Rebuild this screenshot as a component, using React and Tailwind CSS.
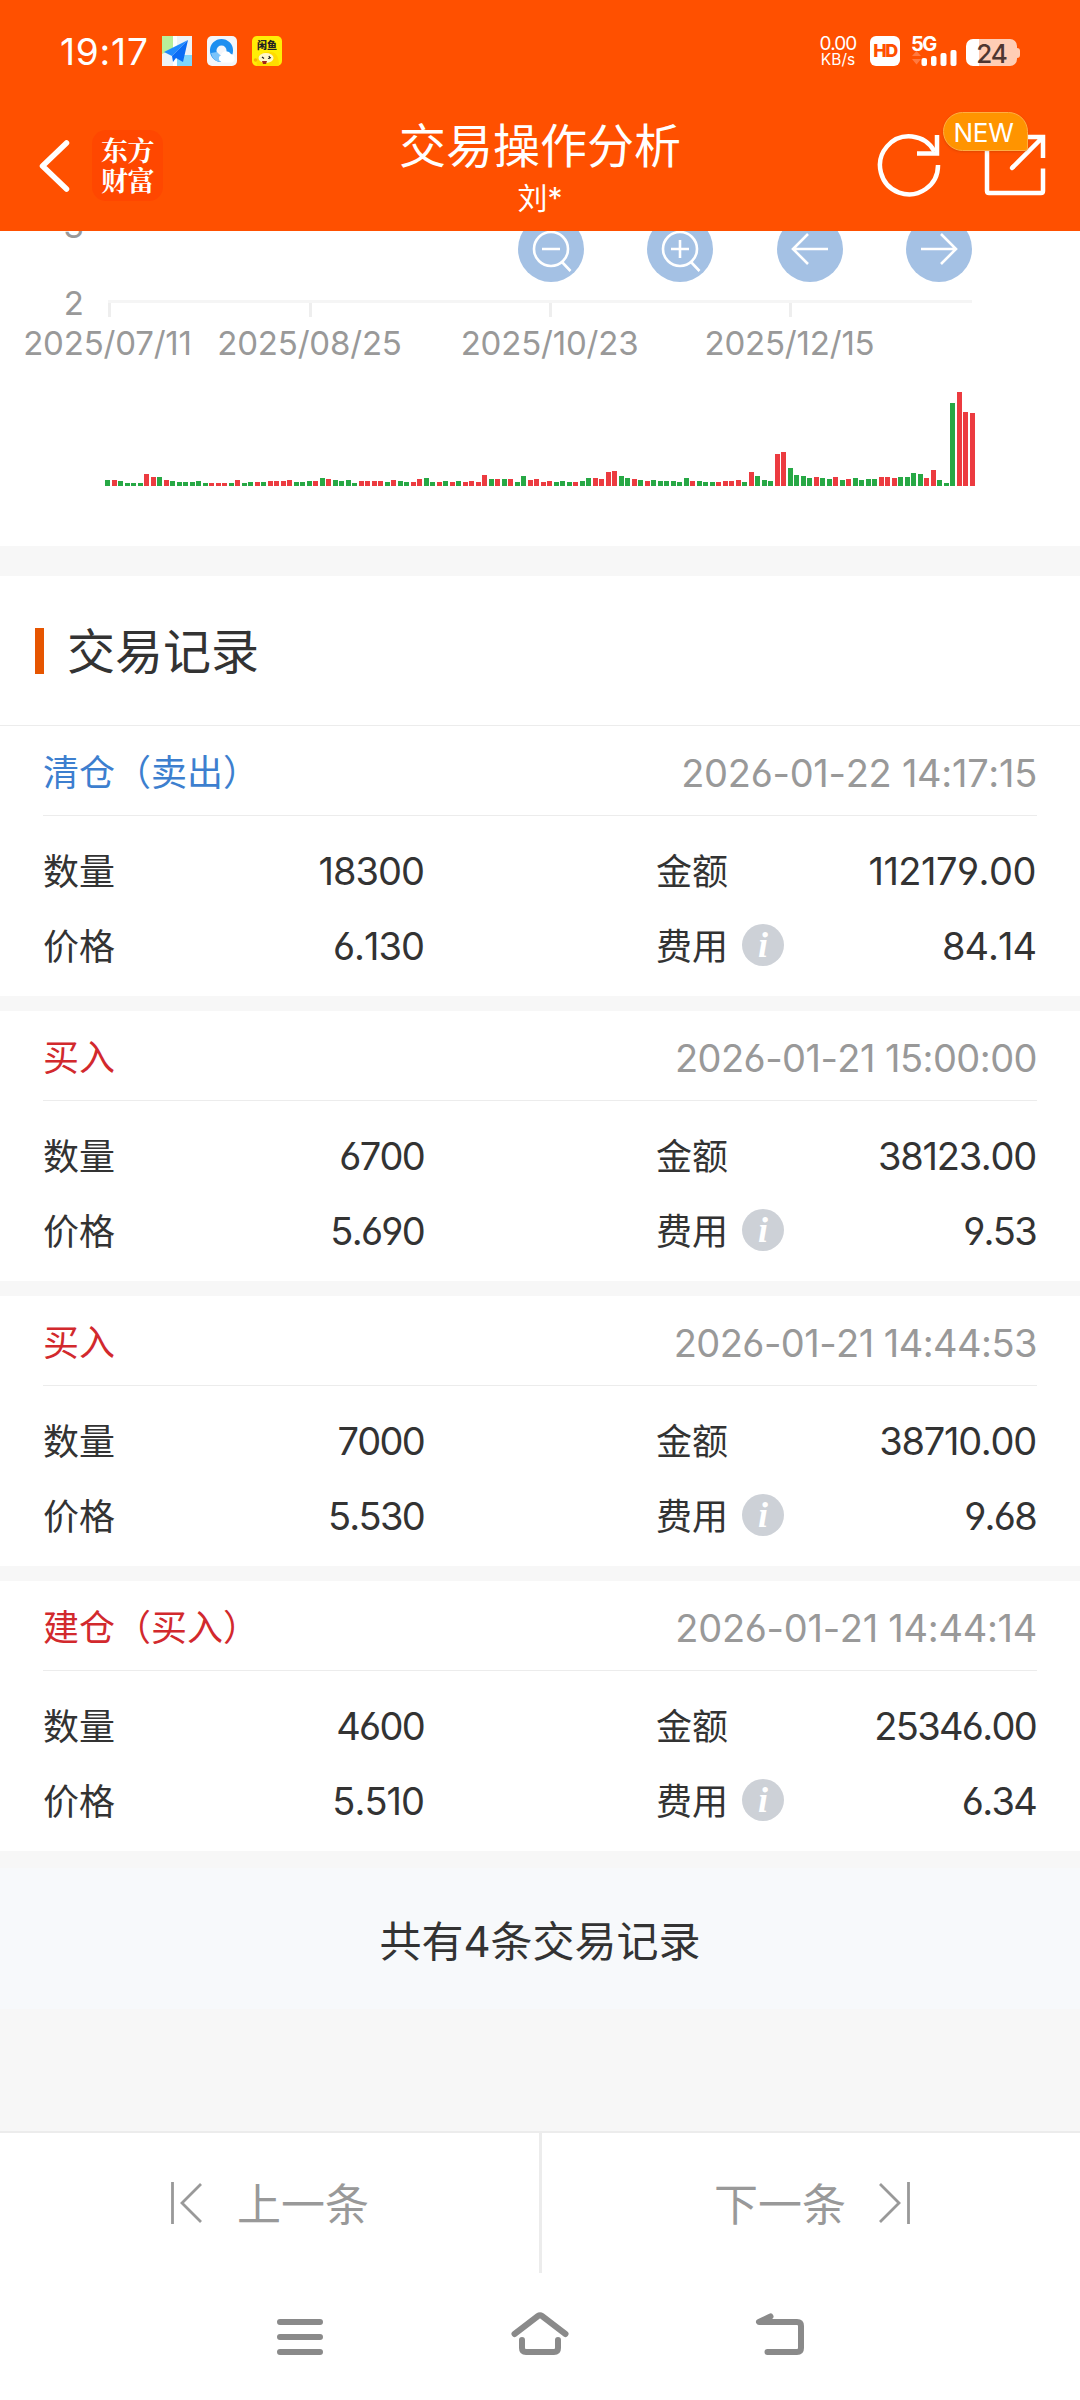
import React from "react";

const CJK = "font-['Inter','Noto_Sans_CJK_SC',sans-serif]";

const VOLUME =
  "G6 R6 G5 G3 G3 G3 R12 R9.5 G9 R6 G5 G4 G4 G4 G5 G3 R3 R3 R3 G3 R6 G3 G4 R4 G4 R5 R5 R5 R6 G4 G4 G5 R5 G8 R7 G6 G5 G6 G3 R5 R5 R5 R5 G4 " +
  "R6.5 G5 G4 R4 R7 G8 G4.5 R4 G5 R4 G5 R4 R5.5 R4 R11 G7 R7 G7 R7 G4.5 G10 R6.5 R7 R4.5 R5.5 G4 G5 G4 R4 G5 G8 R8 R7 R14 R15 G10 G8 R7 G6 R5 G6 G5 G5 G5 G4 G8 " +
  "R5 G5 G4 G4 R4 R5 R5 R6 G4 R14 G10 G6 G5 R32 R34 G18.5 G11 G10 G8 R9 G8 G7 R9 G6 R7 G8 G6 G7 G7 R9 R9 R8 G9 G9 G13 G12 R8 R16 G6 G3 G83 R94 R74 R73";

const bars = VOLUME.split(" ").map((s) => ({ up: s[0] === "R", h: parseFloat(s.slice(1)) }));

const records = [
  { type: "清仓（卖出）", sell: true, time: "2026-01-22 14:17:15", qty: "18300", amount: "112179.00", price: "6.130", fee: "84.14" },
  { type: "买入", time: "2026-01-21 15:00:00", qty: "6700", amount: "38123.00", price: "5.690", fee: "9.53" },
  { type: "买入", time: "2026-01-21 14:44:53", qty: "7000", amount: "38710.00", price: "5.530", fee: "9.68" },
  { type: "建仓（买入）", time: "2026-01-21 14:44:14", qty: "4600", amount: "25346.00", price: "5.510", fee: "6.34" },
];

function tracking(text, base, perOne) {
  const ones = text.split("1").length - 1;
  return base + (perOne * ones) / text.length;
}

function StatusBar() {
  return (
    <div className="flex h-[102px] items-center pl-[60px] pr-[60px] text-white">
      <div className="w-[102px] text-[37px] leading-none tracking-[0.8px] [font-kerning:none]">19:17</div>
      <div className="flex gap-[15px]">
        <svg width="30" height="30" viewBox="0 0 30 30">
          <rect width="30" height="30" fill="#eef3f6" />
          <path d="M0 0h11v13L0 18z" fill="#b9ef9a" />
          <path d="M15 30V19h15v11z" fill="#7fd6fb" />
          <path d="M11 0h4v30h-4z" fill="#fff" />
          <path d="M26 4 2 16l8 4z" fill="#1f8bff" />
          <path d="M26 4 10 20l1 6 3-4 7 4z" fill="#0a6cf5" />
        </svg>
        <svg width="30" height="30" viewBox="0 0 30 30">
          <rect width="30" height="30" rx="5" fill="#f4f6fa" />
          <circle cx="14.500" cy="14.500" r="8.300" fill="none" stroke="#1e8ff0" strokeWidth="6.500" />
          <path d="M4 17a11 11 0 0 0 9 9l1-6-4-4z" fill="#7cc4fa" />
          <path d="M15 26.500a4 4 0 0 1-1-7.500 5.500 5.500 0 0 1 10-1 4.500 4.500 0 0 1 1 8.500z" fill="#fff" />
        </svg>
        <div className="relative h-[30px] w-[30px] overflow-hidden rounded-[5px] bg-[#ffee05]">
          <svg className="absolute inset-0" width="30" height="30" viewBox="0 0 30 30">
            <path d="M5 30c-2-8 2-13 10-14s12 3 12 14z" fill="#ffdc00" />
            <ellipse cx="14" cy="22" rx="7.500" ry="5" fill="#fff7c8" />
            <path d="M10 21l2 1.500M16 22.500l3-1M17 20l1 3" stroke="#222" strokeWidth="1.200" />
            <path d="M10 25h5l-1 3h-3z" fill="#a3241c" />
            <circle cx="3.500" cy="24" r="1.800" fill="#f5b400" />
          </svg>
          <div className="relative pt-[3px] text-center font-['Noto_Sans_CJK_SC',sans-serif] text-[10px] font-black leading-[11px] text-[#222]">闲鱼</div>
        </div>
      </div>
      <div className="ml-auto flex items-center">
        <div className="mr-[13px] w-[38px] text-center">
          <div className="text-[19px] leading-[17px] tracking-[-0.9px]">0.00</div>
          <div className="text-[15.500px] leading-[16px]">KB/s</div>
        </div>
        <div className="mr-[12px] flex h-[30px] w-[30px] items-center justify-center rounded-[6px] bg-white text-[18px] font-extrabold leading-none tracking-[-1.5px] text-[#ff5000]">HD</div>
        <div className="mr-[9px] h-[30px] w-[45px]">
          <div className="-ml-px h-[15px] text-[20px] font-bold leading-[16px] tracking-[-1.5px]">5G</div>
          <svg className="-mt-px" width="45" height="16" viewBox="0 0 45 16">
            <path d="M0 6 4.500 1 9 6zM0 9l4.500 5.500L9 9z" fill="#ff7a40" />
            <rect x="9.500" y="8" width="5.500" height="8" rx="2" fill="#fff" />
            <rect x="19" y="6" width="5.500" height="10" rx="2" fill="#fff" />
            <rect x="28.500" y="3" width="6" height="13" rx="2" fill="#fff" />
            <rect x="38.500" y="0" width="6" height="16" rx="2" fill="#fff" />
          </svg>
        </div>
        <div className="mt-[3px] flex items-center">
          <div className="flex h-[27px] w-[51px] items-center justify-center rounded-[7px] bg-[linear-gradient(90deg,#fff_13px,#ffcdb5_13px)] pt-[2px] text-[26px] font-medium leading-none tracking-[-1px] text-[#4e3631]">24</div>
          <div className="h-[10px] w-[3px] rounded-r-[3px] bg-[#ffcdb5]" />
        </div>
      </div>
    </div>
  );
}

function Header() {
  return (
    <header className="h-[231px] bg-[#ff5000]">
      <StatusBar />
      <div className="grid h-[129px] grid-cols-3">
        <div className="flex pl-[38px] pt-[28px]">
          <svg className="mt-[8px]" width="34" height="56" viewBox="0 0 34 56">
            <path d="M28.500 5 4.500 28l24 23" fill="none" stroke="#fff" strokeWidth="5.500" strokeLinecap="round" strokeLinejoin="round" />
          </svg>
          <div className="ml-[20px] flex h-[71px] w-[71px] flex-col items-center justify-center rounded-[14px] bg-[#ff4700] pb-[2px] font-['Noto_Serif_CJK_SC','Noto_Sans_CJK_SC',serif] text-[27px] font-bold leading-[30px] tracking-[-0.5px] text-white">
            <span>东方</span>
            <span>财富</span>
          </div>
        </div>
        <div className="pt-[16px] text-center text-white">
          <div className="text-[47px] leading-[56px]">交易操作分析</div>
          <div className="text-[30px] leading-[48px]">刘*</div>
        </div>
        <div className="relative flex justify-end pr-[32px] pt-[29px]">
          <svg className="mr-[40px]" width="66" height="68" viewBox="0 0 66 68">
            <g fill="none" stroke="#fff" strokeWidth="4.500">
              <path d="M61 34A29 29 0 1 1 57.500 20.500" />
              <path d="M60 4v18.500H40" />
            </g>
          </svg>
          <svg width="65" height="68" viewBox="0 0 65 68">
            <g fill="none" stroke="#fff" strokeWidth="4.500">
              <path d="M4 14v46q0 2 2 2h52q2 0 2-2V37.500" strokeLinejoin="round" />
              <path d="M40 6h20v21M59 7 29 37" />
              <path d="m29 37 1-1" strokeLinecap="round" />
            </g>
          </svg>
          <div className="absolute left-[223px] top-[10px] flex h-[39px] w-[85px] items-center justify-center rounded-[20px] rounded-br-[3px] border border-[#ffae42] bg-[#ff9400] pr-[4px] pt-[2px] text-[26px] leading-none tracking-[-0.2px] text-white shadow-sm">NEW</div>
        </div>
      </div>
    </header>
  );
}

function RoundButton({ children }) {
  return (
    <svg width="66" height="66" viewBox="-33 -33 66 66">
      <circle r="33" fill="#a4c1e4" />
      <g fill="none" stroke="#fff" strokeWidth="2.600">{children}</g>
    </svg>
  );
}

function Chart() {
  return (
    <section className="h-[315px] overflow-hidden bg-white text-[33px] text-[#999]">
      <div className="flex h-[69px]">
        <div className="-mt-[25px] w-[84px] text-right leading-[40px]">3</div>
        <div className="-mt-[15px] ml-[434px] flex gap-[63.300px]">
          <RoundButton>
            <circle r="17" />
            <path d="M-9 0H9M11 13l8.500 9" />
          </RoundButton>
          <RoundButton>
            <circle r="17" />
            <path d="M-9 0H9M0-9V9M11 13l8.500 9" />
          </RoundButton>
          <RoundButton>
            <path d="M18 0h-35M-2-15-17 0-2 15" />
          </RoundButton>
          <RoundButton>
            <path d="M-18 0h35M2-15 17 0 2 15" />
          </RoundButton>
        </div>
      </div>
      <div className="flex h-[26px]">
        <div className="-mt-[17px] w-[84px] text-right leading-[40px]">2</div>
        <svg className="ml-[24px]" width="864" height="18" viewBox="0 0 864 18">
          <path d="M0 1.500h864" stroke="#f5f5f5" strokeWidth="3" />
          <path d="M1.500 3v14M202.500 3v14M442.500 3v14M682.500 3v14" stroke="#eee" strokeWidth="3" />
        </svg>
      </div>
      <div className="flex leading-[34px] tracking-[-0.2px]">
        <div className="w-[215px] text-center">2025/07/11</div>
        <div className="w-[189px] text-center">2025/08/25</div>
        <div className="w-[291px] text-center">2025/10/23</div>
        <div className="w-[189px] text-center">2025/12/15</div>
      </div>
      <div className="ml-[105px] mt-[30px] flex h-[96px] items-end gap-[1.500px]">
        {bars.map((b, i) => (
          <div key={i} className={b.up ? "w-[5px] shrink-0 bg-[#ec3b40]" : "w-[5px] shrink-0 bg-[#27a845]"} style={{ height: b.h }} />
        ))}
      </div>
    </section>
  );
}

function InfoIcon() {
  return (
    <span className="-mt-[4px] ml-[14px] flex h-[42px] w-[42px] items-center justify-center rounded-full bg-[#cdd1d7] font-['Liberation_Serif',serif] text-[36px] font-bold italic leading-none text-white">i</span>
  );
}

function Num({ children }) {
  return (
    <span
      className="[font-kerning:none] [font-feature-settings:'cv03','cv04','calt'_0]"
      style={{ letterSpacing: tracking(children, -1.7, 3.6) }}
    >
      {children}
    </span>
  );
}

function Record({ r }) {
  return (
    <article className="h-[270px] bg-white px-[43px] text-[38px] text-[#333]">
      <div className="flex h-[90px] items-center justify-between border-b border-[#ececec] pt-[4px]">
        <span className={r.sell ? "text-[36px] text-[#3d7fcf]" : "text-[36px] text-[#d2292d]"}>{r.type}</span>
        <span
          className="pt-[2px] text-[#999] [font-kerning:none] [font-feature-settings:'cv03','cv04']"
          style={{ letterSpacing: tracking(r.time, -1.32, 4.9) }}
        >
          {r.time}
        </span>
      </div>
      <div className="grid grid-cols-[381px_232px_380px] pt-[18px]">
        <div className="flex h-[75px] items-center justify-between">
          <span className="text-[36px]">数量</span>
          <Num>{r.qty}</Num>
        </div>
        <div />
        <div className="flex h-[75px] items-center justify-between">
          <span className="text-[36px]">金额</span>
          <Num>{r.amount}</Num>
        </div>
        <div className="flex h-[75px] items-center justify-between">
          <span className="text-[36px]">价格</span>
          <Num>{r.price}</Num>
        </div>
        <div />
        <div className="flex h-[75px] items-center justify-between">
          <span className="flex items-center text-[36px]">
            费用
            <InfoIcon />
          </span>
          <Num>{r.fee}</Num>
        </div>
      </div>
    </article>
  );
}

function Pager() {
  return (
    <nav className="flex h-[142px] border-t-2 border-[#ececec] bg-white text-[44px] text-[#999]">
      <div className="flex w-[542px] items-center border-r-[3px] border-[#ececec] pl-[170px]">
        <svg width="32" height="44" viewBox="0 0 32 44">
          <path d="M2.500 1v42M31 3 12 22l19 19" fill="none" stroke="#999" strokeWidth="2.800" />
        </svg>
        <span className="ml-[35px] pt-[4px]">上一条</span>
      </div>
      <div className="flex items-center pl-[172px]">
        <span className="pt-[4px]">下一条</span>
        <svg className="ml-[33px]" width="32" height="44" viewBox="0 0 32 44">
          <path d="M29.500 1v42M1 3l19 19L1 41" fill="none" stroke="#999" strokeWidth="2.800" />
        </svg>
      </div>
    </nav>
  );
}

function SystemNav() {
  return (
    <div className="flex h-[127px] justify-center gap-[180px] bg-white pt-[34px]">
      <svg width="60" height="60" viewBox="0 0 60 60">
        <path d="M10 15h40M10 30h40M10 45h40" stroke="#8a8a8a" strokeWidth="6" strokeLinecap="round" />
      </svg>
      <svg width="60" height="60" viewBox="0 0 60 60">
        <g fill="none" stroke="#8a8a8a" strokeWidth="6" strokeLinecap="round" strokeLinejoin="round">
          <path d="M4.500 27 28 9q2-1.500 4 0l23.500 18" />
          <path d="M12 33v8q0 4 4 4h28q4 0 4-4v-8" />
        </g>
      </svg>
      <svg width="60" height="60" viewBox="0 0 60 60">
        <path d="M20.500 9.500 9 15h38q4 0 4 4v22q0 4-4 4H17.500" fill="none" stroke="#8a8a8a" strokeWidth="6" strokeLinecap="round" strokeLinejoin="round" />
      </svg>
    </div>
  );
}

export default function App() {
  return (
    <div className={"h-[2400px] w-[1080px] overflow-hidden bg-[#f7f7f7] " + CJK}>
      <Header />
      <Chart />
      <section className="mt-[30px]">
        <div className="flex h-[150px] items-center border-b border-[#ececec] bg-white pl-[35px]">
          <div className="h-[46px] w-[9px] bg-[#e65500]" />
          <h2 className="ml-[23px] pt-[3px] text-[48px] leading-none text-[#333]">交易记录</h2>
        </div>
        <div className="flex flex-col gap-[15px]">
          {records.map((r) => (
            <Record key={r.time} r={r} />
          ))}
        </div>
      </section>
      <div className="mt-[17px] flex h-[141px] items-center justify-center bg-[#f7f9fb] pt-[5px] text-[42px] text-[#333]">共有4条交易记录</div>
      <div className="h-[122px]" />
      <Pager />
      <SystemNav />
    </div>
  );
}
